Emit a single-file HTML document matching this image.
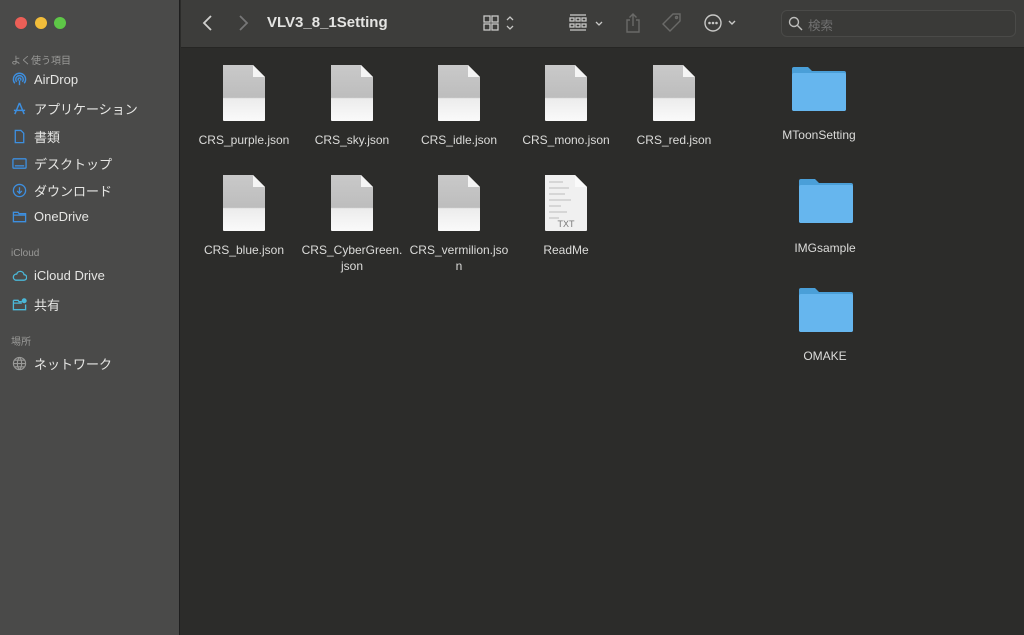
<!DOCTYPE html>
<html><head><meta charset="utf-8"><style>
*{margin:0;padding:0;box-sizing:border-box}
body{width:1024px;height:635px;overflow:hidden;background:#2c2c2a;font-family:"Liberation Sans","Noto Sans CJK JP",sans-serif;position:relative}
#sb{position:absolute;left:0;top:0;width:180px;height:635px;background:#4a4a49;border-right:1px solid #1e1e1e}
#tb{position:absolute;left:181px;top:0;right:0;height:48px;background:#3d3d3b;border-bottom:1px solid #262624}
.dot{position:absolute;top:17px;width:12px;height:12px;border-radius:50%}
.hd{position:absolute;left:11px;font-size:10px;color:#9a9a98}
.it{position:absolute;left:12px;font-size:13px;color:#e6e6e4;display:flex;align-items:center;gap:7px}
.it svg{width:15px;height:15px}
.f{position:absolute;width:44px;height:58px}
.lb{position:absolute;font-size:12px;color:#dcdcda;text-align:center;width:110px;line-height:16px}
.fd{position:absolute;width:58px;height:48px}
</style></head><body>
<div id="sb">
<div class="dot" style="left:15px;background:#ec5f57"></div>
<div class="dot" style="left:35px;background:#f2bd3a"></div>
<div class="dot" style="left:54px;background:#5ec747"></div>
<div class="hd" style="top:52px">よく使う項目</div>
<div class="it" style="top:72px"><svg viewBox="0 0 16 16" fill="none" stroke="#3d8fe0" stroke-width="1.5"><path d="M3 12A6.5 6.5 0 1 1 13 12M5 10.5A4 4 0 1 1 11 10.5M7 9A1.5 1.5 0 1 1 9 9"/><path d="M8 9 L8 14" /></svg>AirDrop</div>
<div class="it" style="top:99px"><svg viewBox="0 0 16 16" fill="none" stroke="#3d8fe0" stroke-width="1.6"><path d="M8 2L3 14M8 2l5 12M2 10h12"/></svg>アプリケーション</div>
<div class="it" style="top:127px"><svg viewBox="0 0 16 16" fill="none" stroke="#3d8fe0" stroke-width="1.4"><path d="M3.5 1.5h6l3 3v10h-9z"/></svg>書類</div>
<div class="it" style="top:154px"><svg viewBox="0 0 16 16" fill="none" stroke="#3d8fe0" stroke-width="1.4"><rect x="1" y="3" width="14" height="10" rx="1"/><path d="M3 10.5h10"/></svg>デスクトップ</div>
<div class="it" style="top:181px"><svg viewBox="0 0 16 16" fill="none" stroke="#3d8fe0" stroke-width="1.4"><circle cx="8" cy="8" r="6.5"/><path d="M8 4.5v6M5.5 8.5 8 11l2.5-2.5"/></svg>ダウンロード</div>
<div class="it" style="top:209px"><svg viewBox="0 0 16 16" fill="none" stroke="#3d8fe0" stroke-width="1.4"><path d="M1.5 3.5h5l1 1.5h7v8.5h-13z M1.5 6.5h13"/></svg>OneDrive</div>
<div class="hd" style="top:248px">iCloud</div>
<div class="it" style="top:268px"><svg viewBox="0 0 16 16" fill="none" stroke="#4bb8d8" stroke-width="1.4"><path d="M4 13h8.5a3 3 0 0 0 .3-6A4 4 0 0 0 5 6.5 3.3 3.3 0 0 0 4 13z"/></svg>iCloud Drive</div>
<div class="it" style="top:295px"><svg viewBox="0 0 16 16" fill="none" stroke="#4bb8d8" stroke-width="1.4"><path d="M1.5 3.5h5l1 1.5h3M14.5 8v5.5h-13v-10M1.5 6.5h9"/><circle cx="13" cy="4" r="2" fill="#4bb8d8"/></svg>共有</div>
<div class="hd" style="top:333px">場所</div>
<div class="it" style="top:354px"><svg viewBox="0 0 16 16" fill="none" stroke="#9a9a98" stroke-width="1.2"><circle cx="8" cy="8" r="6.5"/><path d="M1.5 8h13M8 1.5c-3 3-3 10 0 13M8 1.5c3 3 3 10 0 13M3 4.5h10M3 11.5h10"/></svg>ネットワーク</div>
</div>
<div id="tb">
<svg style="position:absolute;left:20px;top:14px" width="14" height="18" viewBox="0 0 14 18" fill="none" stroke="#d0d0ce" stroke-width="1.8"><path d="M10 2 3 9l7 7"/></svg>
<svg style="position:absolute;left:55px;top:14px" width="14" height="18" viewBox="0 0 14 18" fill="none" stroke="#777" stroke-width="1.8"><path d="M4 2l7 7-7 7"/></svg>
<div style="position:absolute;left:86px;top:14px;font-size:15px;font-weight:bold;color:#e4e4e2">VLV3_8_1Setting</div>
<svg style="position:absolute;left:302px;top:14px" width="36" height="20" viewBox="0 0 36 20" fill="none" stroke="#c8c8c6" stroke-width="1.3"><rect x="1" y="2" width="6" height="6"/><rect x="9" y="2" width="6" height="6"/><rect x="1" y="10" width="6" height="6"/><rect x="9" y="10" width="6" height="6"/><path d="M24 6l3-3 3 3M24 12l3 3 3-3"/></svg>
<svg style="position:absolute;left:388px;top:13px" width="36" height="20" viewBox="0 0 36 20" fill="none" stroke="#c8c8c6" stroke-width="1.3"><path d="M1 2h16"/><rect x="1" y="5" width="4" height="3"/><rect x="7" y="5" width="4" height="3"/><rect x="13" y="5" width="4" height="3"/><rect x="1" y="11" width="4" height="3"/><rect x="7" y="11" width="4" height="3"/><rect x="13" y="11" width="4" height="3"/><path d="M1 17h16M27 9l3 3 3-3"/></svg>
<svg style="position:absolute;left:443px;top:12px" width="18" height="22" viewBox="0 0 18 22" fill="none" stroke="#6a6a68" stroke-width="1.4"><path d="M6 8H3v12h12V8h-3M9 14V2M5.5 5.5 9 2l3.5 3.5"/></svg>
<svg style="position:absolute;left:480px;top:12px" width="22" height="22" viewBox="0 0 22 22" fill="none" stroke="#6a6a68" stroke-width="1.4"><path d="M12 2h7v7L9 19l-7-7z"/><circle cx="15.5" cy="5.5" r="1"/></svg>
<svg style="position:absolute;left:521px;top:12px" width="40" height="22" viewBox="0 0 40 22" fill="none" stroke="#c8c8c6" stroke-width="1.4"><circle cx="11" cy="11" r="8"/><circle cx="7.5" cy="11" r=".6" fill="#c8c8c6"/><circle cx="11" cy="11" r=".6" fill="#c8c8c6"/><circle cx="14.5" cy="11" r=".6" fill="#c8c8c6"/><path d="M27 9l3 3 3-3"/></svg>
<div style="position:absolute;left:600px;top:10px;width:235px;height:27px;border:1px solid #4a4a48;border-radius:6px;background:#3a3a38"></div>
<svg style="position:absolute;left:607px;top:16px" width="15" height="15" viewBox="0 0 15 15" fill="none" stroke="#bdbdbb" stroke-width="1.4"><circle cx="6" cy="6" r="4.5"/><path d="M9.5 9.5 14 14"/></svg>
<div style="position:absolute;left:627px;top:15px;font-size:12.5px;color:#707070">検索</div>
</div>
<svg width="0" height="0" style="position:absolute"><defs>
<linearGradient id="pg" x1="0" y1="0" x2="0" y2="1"><stop offset="0" stop-color="#c9c9c9"/><stop offset=".58" stop-color="#bdbdbd"/><stop offset=".6" stop-color="#ececec"/><stop offset="1" stop-color="#fafafa"/></linearGradient>
</defs></svg>
<svg class="f" style="left:222px;top:64px" viewBox="0 0 44 58"><path d="M1 1h30l12 12v43a1 1 0 0 1-1 1H2a1 1 0 0 1-1-1z" fill="url(#pg)"/><path d="M31 1v12h12z" fill="#f4f4f4"/></svg>
<svg class="f" style="left:330px;top:64px" viewBox="0 0 44 58"><path d="M1 1h30l12 12v43a1 1 0 0 1-1 1H2a1 1 0 0 1-1-1z" fill="url(#pg)"/><path d="M31 1v12h12z" fill="#f4f4f4"/></svg>
<svg class="f" style="left:437px;top:64px" viewBox="0 0 44 58"><path d="M1 1h30l12 12v43a1 1 0 0 1-1 1H2a1 1 0 0 1-1-1z" fill="url(#pg)"/><path d="M31 1v12h12z" fill="#f4f4f4"/></svg>
<svg class="f" style="left:544px;top:64px" viewBox="0 0 44 58"><path d="M1 1h30l12 12v43a1 1 0 0 1-1 1H2a1 1 0 0 1-1-1z" fill="url(#pg)"/><path d="M31 1v12h12z" fill="#f4f4f4"/></svg>
<svg class="f" style="left:652px;top:64px" viewBox="0 0 44 58"><path d="M1 1h30l12 12v43a1 1 0 0 1-1 1H2a1 1 0 0 1-1-1z" fill="url(#pg)"/><path d="M31 1v12h12z" fill="#f4f4f4"/></svg>
<svg class="f" style="left:222px;top:174px" viewBox="0 0 44 58"><path d="M1 1h30l12 12v43a1 1 0 0 1-1 1H2a1 1 0 0 1-1-1z" fill="url(#pg)"/><path d="M31 1v12h12z" fill="#f4f4f4"/></svg>
<svg class="f" style="left:330px;top:174px" viewBox="0 0 44 58"><path d="M1 1h30l12 12v43a1 1 0 0 1-1 1H2a1 1 0 0 1-1-1z" fill="url(#pg)"/><path d="M31 1v12h12z" fill="#f4f4f4"/></svg>
<svg class="f" style="left:437px;top:174px" viewBox="0 0 44 58"><path d="M1 1h30l12 12v43a1 1 0 0 1-1 1H2a1 1 0 0 1-1-1z" fill="url(#pg)"/><path d="M31 1v12h12z" fill="#f4f4f4"/></svg>
<svg class="f" style="left:544px;top:174px" viewBox="0 0 44 58"><path d="M1 1h30l12 12v43a1 1 0 0 1-1 1H2a1 1 0 0 1-1-1z" fill="#f0f0f0"/><path d="M31 1v12h12z" fill="#fafafa"/><g stroke="#aaa" stroke-width=".8"><path d="M5 8h14M5 14h20M5 20h16M5 26h22M5 32h12M5 38h18M5 44h10"/></g><text x="22" y="53" font-size="9" fill="#777" text-anchor="middle" font-family="Liberation Sans">TXT</text></svg>
<div class="lb" style="left:189px;top:132px">CRS_purple.json</div>
<div class="lb" style="left:297px;top:132px">CRS_sky.json</div>
<div class="lb" style="left:404px;top:132px">CRS_idle.json</div>
<div class="lb" style="left:511px;top:132px">CRS_mono.json</div>
<div class="lb" style="left:619px;top:132px">CRS_red.json</div>
<div class="lb" style="left:189px;top:242px">CRS_blue.json</div>
<div class="lb" style="left:297px;top:242px">CRS_CyberGreen.<br>json</div>
<div class="lb" style="left:404px;top:242px">CRS_vermilion.jso<br>n</div>
<div class="lb" style="left:511px;top:242px">ReadMe</div>
<svg class="fd" style="left:790px;top:65px" viewBox="0 0 58 48"><path d="M2 4a2 2 0 0 1 2-2h14l4 4h32a2 2 0 0 1 2 2v36a2 2 0 0 1-2 2H4a2 2 0 0 1-2-2z" fill="#4a9fd8"/><path d="M2 10a2 2 0 0 1 2-2h50a2 2 0 0 1 2 2v34a2 2 0 0 1-2 2H4a2 2 0 0 1-2-2z" fill="#66b6ee"/></svg>
<svg class="fd" style="left:797px;top:177px" viewBox="0 0 58 48"><path d="M2 4a2 2 0 0 1 2-2h14l4 4h32a2 2 0 0 1 2 2v36a2 2 0 0 1-2 2H4a2 2 0 0 1-2-2z" fill="#4a9fd8"/><path d="M2 10a2 2 0 0 1 2-2h50a2 2 0 0 1 2 2v34a2 2 0 0 1-2 2H4a2 2 0 0 1-2-2z" fill="#66b6ee"/></svg>
<svg class="fd" style="left:797px;top:286px" viewBox="0 0 58 48"><path d="M2 4a2 2 0 0 1 2-2h14l4 4h32a2 2 0 0 1 2 2v36a2 2 0 0 1-2 2H4a2 2 0 0 1-2-2z" fill="#4a9fd8"/><path d="M2 10a2 2 0 0 1 2-2h50a2 2 0 0 1 2 2v34a2 2 0 0 1-2 2H4a2 2 0 0 1-2-2z" fill="#66b6ee"/></svg>
<div class="lb" style="left:764px;top:127px">MToonSetting</div>
<div class="lb" style="left:770px;top:240px">IMGsample</div>
<div class="lb" style="left:770px;top:348px">OMAKE</div>
</body></html>
